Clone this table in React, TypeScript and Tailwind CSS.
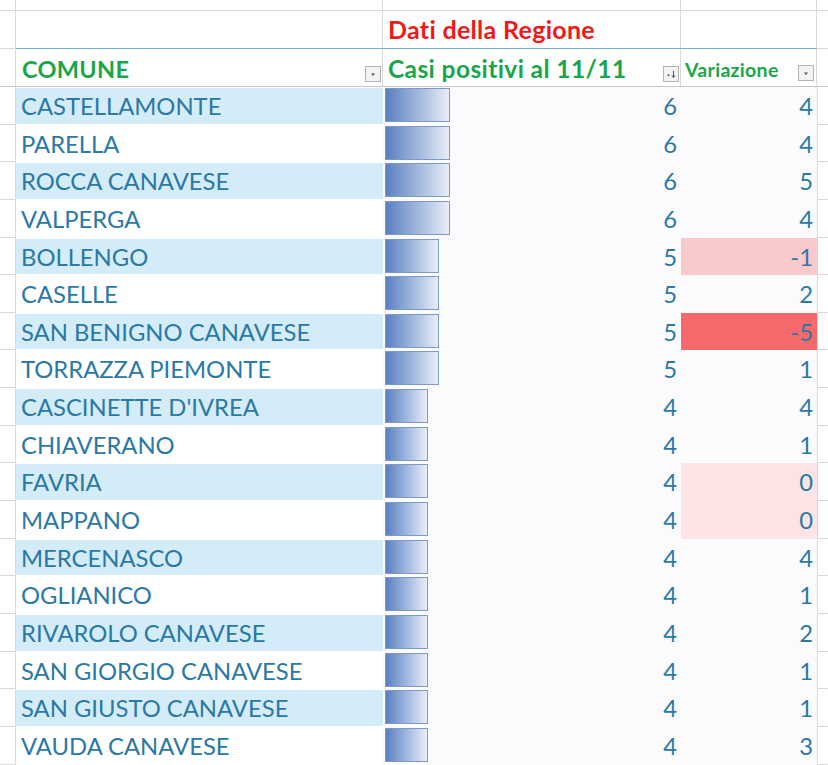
import React from "react";

interface IRow {
  comune: string;
  casi: number;
  variazione: number;
  fill?: string;
}

const rows: IRow[] = [
  { comune: "CASTELLAMONTE", casi: 6, variazione: 4 },
  { comune: "PARELLA", casi: 6, variazione: 4 },
  { comune: "ROCCA CANAVESE", casi: 6, variazione: 5 },
  { comune: "VALPERGA", casi: 6, variazione: 4 },
  { comune: "BOLLENGO", casi: 5, variazione: -1, fill: "bg-[#f9c9cb]" },
  { comune: "CASELLE", casi: 5, variazione: 2 },
  { comune: "SAN BENIGNO CANAVESE", casi: 5, variazione: -5, fill: "bg-[#f8696b]" },
  { comune: "TORRAZZA PIEMONTE", casi: 5, variazione: 1 },
  { comune: "CASCINETTE D'IVREA", casi: 4, variazione: 4 },
  { comune: "CHIAVERANO", casi: 4, variazione: 1 },
  { comune: "FAVRIA", casi: 4, variazione: 0, fill: "bg-[#fce3e4]" },
  { comune: "MAPPANO", casi: 4, variazione: 0, fill: "bg-[#fce3e4]" },
  { comune: "MERCENASCO", casi: 4, variazione: 4 },
  { comune: "OGLIANICO", casi: 4, variazione: 1 },
  { comune: "RIVAROLO CANAVESE", casi: 4, variazione: 2 },
  { comune: "SAN GIORGIO CANAVESE", casi: 4, variazione: 1 },
  { comune: "SAN GIUSTO CANAVESE", casi: 4, variazione: 1 },
  { comune: "VAUDA CANAVESE", casi: 4, variazione: 3 },
];

const FilterButton = ({ sorted }: { sorted?: boolean }) => (
  <div className="flex h-[16px] w-[16px] items-center justify-center border border-[#b4b4b4] bg-[#f3f3f3]">
    <svg width="12" height="12" viewBox="0 0 12 12">
      {sorted ? (
        <>
          <path d="M2 6.5 L5 6.5 L3.5 8.5 Z" fill="#555" />
          <path d="M8.5 3 L8.5 9" stroke="#555" strokeWidth="1" />
          <path d="M7 7.5 L8.5 9.5 L10 7.5" stroke="#555" strokeWidth="1" fill="none" />
        </>
      ) : (
        <path d="M4 5.5 L8 5.5 L6 8 Z" fill="#555" />
      )}
    </svg>
  </div>
);

export default function App() {
  return (
    <div
      className="h-[765px] w-[828px] overflow-hidden bg-white text-[#2a79a6]"
      style={{ fontFamily: "Lato, 'Open Sans', sans-serif" }}
    >
      {/* top spare row */}
      <div className="flex h-[11px] border-b border-[#d9d9d9]">
        <div className="w-[16px] border-r border-[#d9d9d9]" />
        <div className="w-[367px] border-r border-[#d9d9d9]" />
        <div className="w-[298px] border-r border-[#d9d9d9]" />
        <div className="w-[136px] border-r border-[#d9d9d9]" />
        <div className="flex-1" />
      </div>

      {/* header row 1 */}
      <div className="flex h-[38px]">
        <div className="w-[16px] border-r border-b border-[#d9d9d9]" />
        <div className="flex w-[801px] border-b border-[#6fb0d8]">
          <div className="w-[367px] border-r border-[#d9d9d9]" />
          <div className="flex w-[298px] items-center border-r border-[#d9d9d9] pl-[5px] text-[25px] font-bold tracking-[0.3px] text-[#f01818]">
            Dati della Regione
          </div>
          <div className="w-[136px] border-r border-[#d9d9d9]" />
        </div>
        <div className="flex-1 border-b border-[#d9d9d9]" />
      </div>

      {/* header row 2 */}
      <div className="flex h-[38px] border-b border-[#c8c8c8] font-bold text-[#19a64a]">
        <div className="w-[16px] border-r border-[#d9d9d9]" />
        <div className="flex w-[367px] items-center justify-between border-r border-[#d9d9d9] pl-[6px] pr-[1px] pt-[4px] text-[23.5px] tracking-[0.3px]">
          <span>COMUNE</span>
          <div className="mt-[8px]">
            <FilterButton />
          </div>
        </div>
        <div className="flex w-[298px] items-center justify-between border-r border-[#d9d9d9] pl-[5px] pr-[1px] pt-[4px] text-[24.5px] tracking-[0.4px]">
          <span>Casi positivi al 11/11</span>
          <div className="mt-[8px]">
            <FilterButton sorted />
          </div>
        </div>
        <div className="flex w-[136px] items-center justify-between border-r border-[#d9d9d9] pl-[4px] pr-[2px] pt-[5px] text-[19.5px] tracking-[0.3px]">
          <span>Variazione</span>
          <div className="mt-[6px]">
            <FilterButton />
          </div>
        </div>
        <div className="flex-1" />
      </div>

      {/* data rows */}
      {rows.map((row, i) => (
        <div key={row.comune} className="flex h-[37.65px] text-[23.8px]">
          <div className="w-[16px] border-r border-b border-[#d9d9d9]" />
          <div
            className={`flex w-[367px] items-center border-y border-white pl-[5px] pt-[2px] ${
              i % 2 === 0 ? "bg-[#d4ecf8]" : "bg-white"
            }`}
          >
            {row.comune}
          </div>
          <div className="relative flex w-[298px] items-center justify-end bg-[#fbfbfe] pr-[4px] pt-[2px]">
            <div
              className="absolute left-[2px] top-[1px] h-[34px] border border-[#7f98c6] bg-gradient-to-r from-[#5a80c1] to-[#e9eef7]"
              style={{ width: row.casi * 10.9 - 0.5 }}
            />
            <span className="relative">{row.casi}</span>
          </div>
          <div
            className={`flex w-[136px] items-center justify-end pr-[4px] pt-[2px] ${
              row.fill ?? "bg-[#fbfbfe]"
            }`}
          >
            {row.variazione}
          </div>
          <div className="flex-1 border-l border-b border-[#d9d9d9]" />
        </div>
      ))}
    </div>
  );
}
